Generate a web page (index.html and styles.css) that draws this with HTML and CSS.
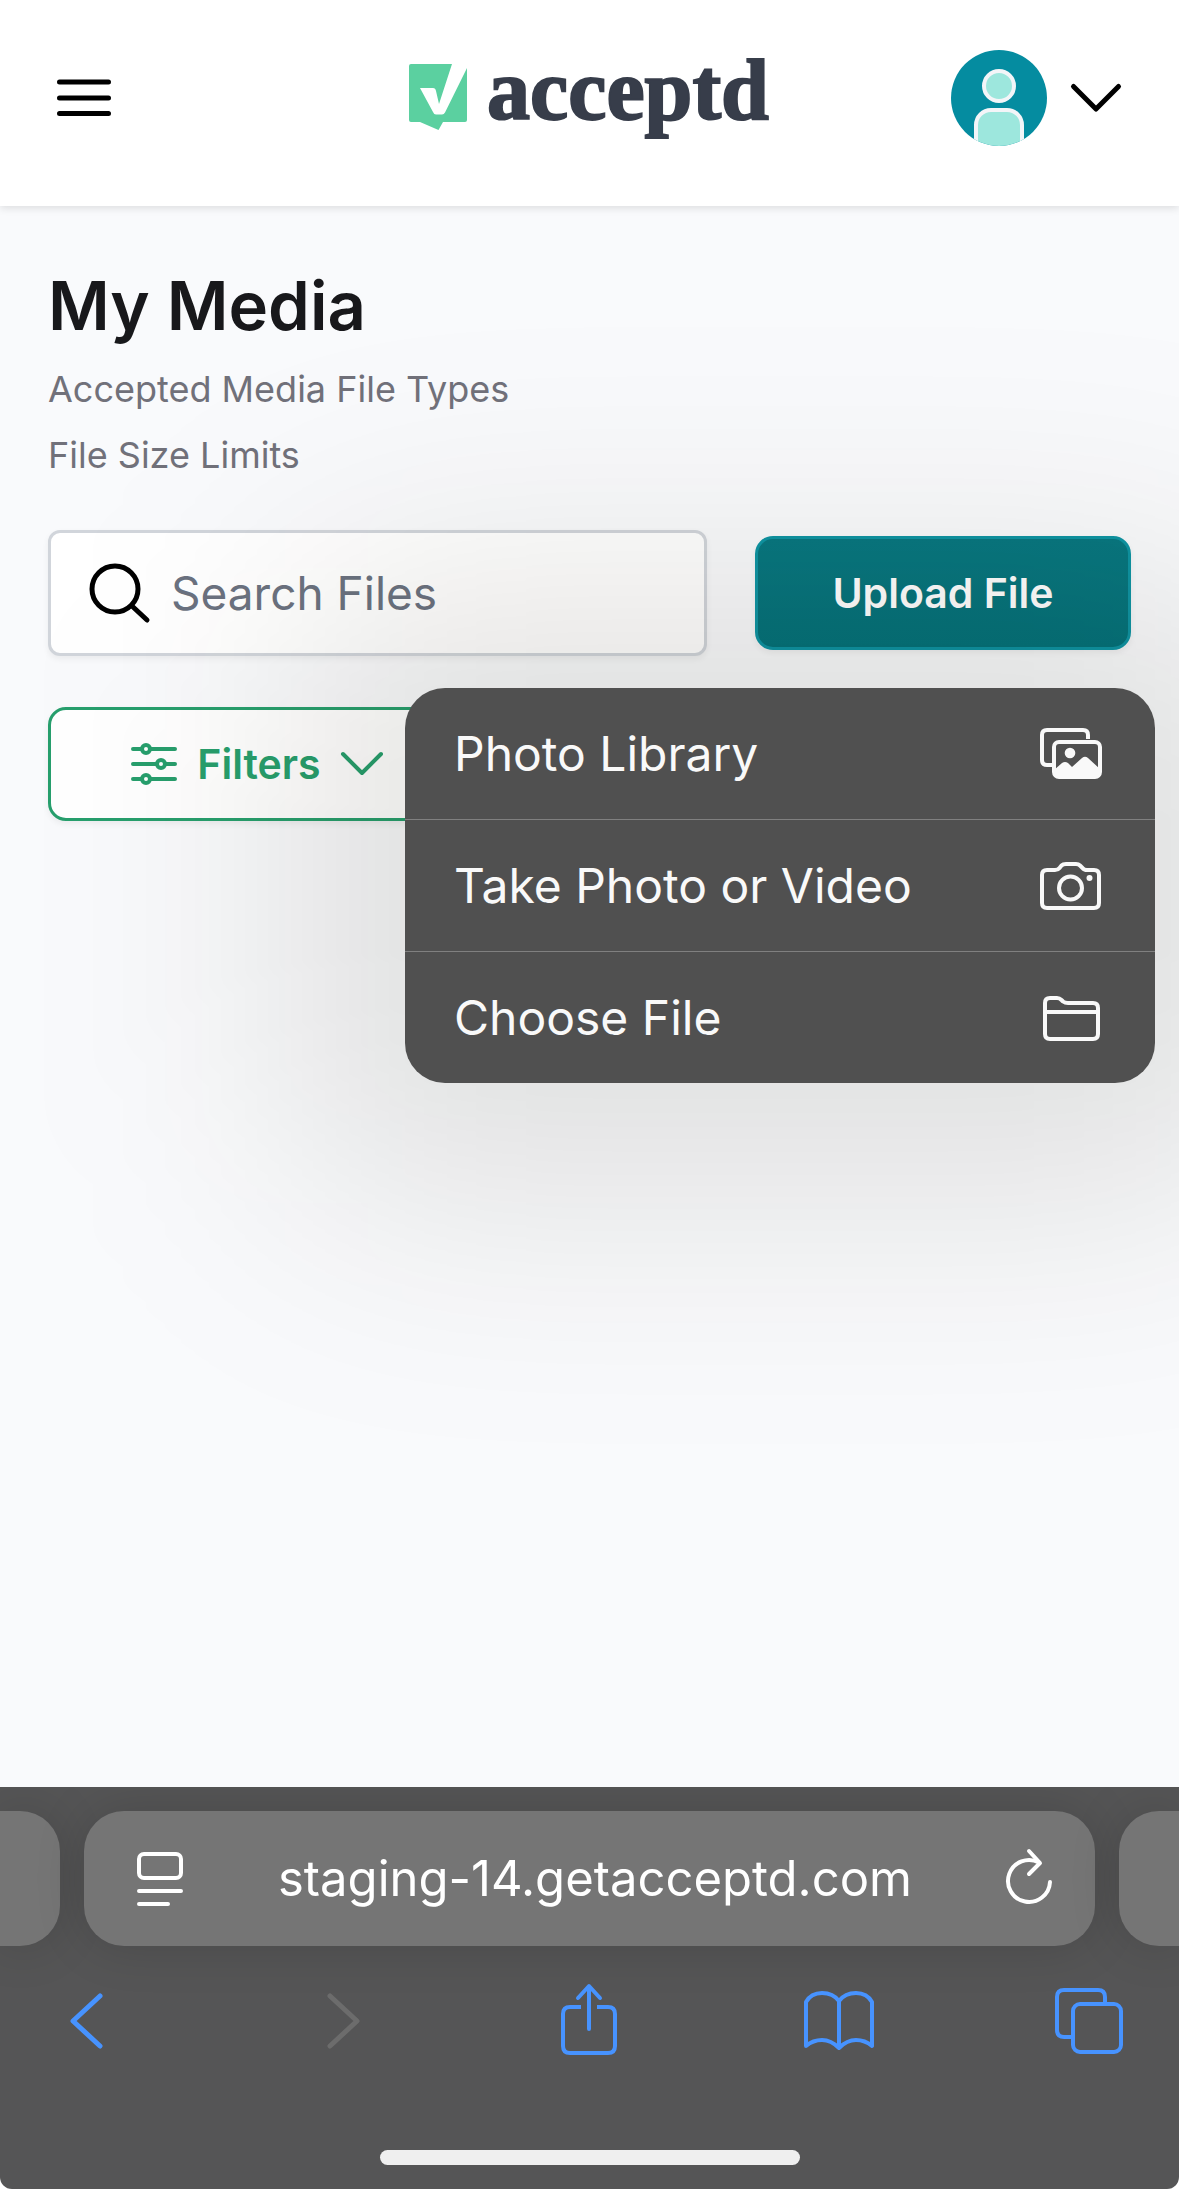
FILE: index.html
```html
<!DOCTYPE html>
<html lang="en">
<head>
    <meta charset="UTF-8">
    <meta name="viewport" content="width=device-width, initial-scale=1.0">
    <title>My Media</title>
    <link rel="stylesheet" href="styles.css">
</head>
<body>
    <header class="site-header">
        <button type="button" class="icon-button menu-toggle" aria-label="Open menu">
            <svg width="54" height="38" viewBox="0 0 54 38" fill="none" stroke="currentColor" stroke-width="5" stroke-linecap="round">
                <path d="M2.5 3h49M2.5 19h49M2.5 34.500h49"/>
            </svg>
        </button>
        <a href="#" class="logo">
            <svg class="logo-mark" width="58" height="67" viewBox="0 0 58 67" aria-hidden="true">
                <path fill="#5bd0a0" d="M2 0H43L30 40L27 27Q26.500 24 24 24H11L24 48Q25 50.500 27 50.500H33Q35 50.500 36 48.500L58 4V56Q58 58 56 58H34L29.500 66L11 58H2Q0 58 0 56V2Q0 0 2 0Z"/>
            </svg>
            <span class="logo-text">acceptd</span>
        </a>
        <button type="button" class="icon-button account" aria-label="Account">
            <svg width="96" height="96" viewBox="0 0 96 96">
                <clipPath id="avatarClip"><circle cx="48" cy="48" r="48"/></clipPath>
                <g clip-path="url(#avatarClip)">
                    <rect width="96" height="96" fill="#058ca0"/>
                    <g fill="#9de7dd" stroke="#f3f5f8" stroke-width="4">
                        <circle cx="48" cy="36" r="15"/>
                        <rect x="25" y="60" width="46" height="60" rx="15"/>
                    </g>
                </g>
            </svg>
            <svg width="50" height="28" viewBox="0 0 50 28" fill="none" stroke="currentColor" stroke-width="5" stroke-linecap="round" stroke-linejoin="round">
                <path d="M2.500 2.500L25 25L47.500 2.500"/>
            </svg>
        </button>
    </header>

    <main class="content">
        <h1>My Media</h1>
        <a href="#" class="help-link">Accepted Media File Types</a>
        <a href="#" class="help-link">File Size Limits</a>

        <div class="actions">
            <label class="search">
                <svg width="60" height="62" viewBox="0 0 60 62" fill="none" stroke="currentColor" stroke-width="5" stroke-linecap="round" aria-hidden="true">
                    <circle cx="25" cy="27" r="23"/>
                    <path d="M42 44L57 58"/>
                </svg>
                <input type="text" placeholder="Search Files" aria-label="Search Files">
            </label>
            <div class="upload">
                <button type="button" class="upload-button" aria-haspopup="true" aria-expanded="true">Upload File</button>
                <ul class="upload-menu">
                    <li>
                        <button type="button">
                            Photo Library
                            <svg width="62" height="52" viewBox="0 0 62 52" fill="none" stroke="currentColor" stroke-width="4">
                                <path d="M48 11V7Q48 2 43 2H7Q2 2 2 7V32Q2 37 7 37H12"/>
                                <rect x="14" y="14" width="46" height="35" rx="5"/>
                                <circle cx="30" cy="25" r="5.300" fill="currentColor" stroke="none"/>
                                <path fill="currentColor" stroke="none" d="M14 42L22 35Q25 33 28 35L32 39L42 30Q45 27.500 48 30L60 41V46Q60 49 56 49H18Q14 49 14 46Z"/>
                            </svg>
                        </button>
                    </li>
                    <li>
                        <button type="button">
                            Take Photo or Video
                            <svg width="62" height="52" viewBox="0 0 62 52" fill="none" stroke="currentColor" stroke-width="4" stroke-linejoin="round">
                                <path d="M7 10H15Q18 10 19.500 8L21.500 5.500Q23 4 26 4H36Q38.500 4 40 5.500L42.500 8Q44 10 47 10H54Q59 10 59 15V43Q59 48 54 48H7Q2 48 2 43V15Q2 10 7 10Z"/>
                                <circle cx="30.500" cy="28" r="11.500"/>
                                <circle cx="49.500" cy="18" r="3" fill="currentColor" stroke="none"/>
                            </svg>
                        </button>
                    </li>
                    <li>
                        <button type="button">
                            Choose File
                            <svg width="62" height="52" viewBox="0 0 62 52" fill="none" stroke="currentColor" stroke-width="4" stroke-linejoin="round">
                                <path d="M10 6H17Q19.500 6 21.500 8L23 9.500Q25 11 28 11H53Q58 11 58 16V42Q58 47 53 47H10Q5 47 5 42V11Q5 6 10 6Z"/>
                                <path d="M5 20H58"/>
                            </svg>
                        </button>
                    </li>
                </ul>
            </div>
        </div>

        <button type="button" class="filters">
            <svg width="46" height="42" viewBox="0 0 46 42" fill="none" stroke="currentColor" stroke-width="4" stroke-linecap="round">
                <path d="M2 6H10M20 6H44M2 21H25M35 21H44M2 36H10M20 36H44"/>
                <circle cx="15" cy="6" r="4"/>
                <circle cx="30" cy="21" r="4"/>
                <circle cx="15" cy="36" r="4"/>
            </svg>
            Filters
            <svg width="42" height="24" viewBox="0 0 42 24" fill="none" stroke="currentColor" stroke-width="4" stroke-linecap="round" stroke-linejoin="round">
                <path d="M2 2L21 21L40 2"/>
            </svg>
        </button>
    </main>

    <footer class="browser-bar">
        <div class="tabs">
            <div class="tab tab-side tab-previous"></div>
            <div class="tab tab-current">
                <button type="button" class="icon-button" aria-label="Page settings">
                    <svg width="46" height="54" viewBox="0 0 46 54" fill="none" stroke="currentColor" stroke-width="4" stroke-linecap="round">
                        <rect x="2" y="2" width="42" height="24" rx="5"/>
                        <path d="M2 39H44M2 52H31"/>
                    </svg>
                </button>
                <input type="text" value="staging-14.getacceptd.com" aria-label="Address">
                <button type="button" class="icon-button" aria-label="Reload">
                    <svg width="46" height="54" viewBox="0 0 46 54" fill="none" stroke="currentColor" stroke-width="4" stroke-linecap="round" stroke-linejoin="round">
                        <path d="M43 30A21 21 0 1 1 32 10.500"/>
                        <path d="M22 -1L33 11L22 22"/>
                    </svg>
                </button>
            </div>
            <div class="tab tab-side tab-next"></div>
        </div>
        <nav class="toolbar">
            <button type="button" class="icon-button" aria-label="Back">
                <svg width="90" height="72" viewBox="0 0 90 72" fill="none" stroke="currentColor" stroke-width="5" stroke-linecap="round" stroke-linejoin="round">
                    <path d="M56 12L29 37L56 62"/>
                </svg>
            </button>
            <button type="button" class="icon-button" aria-label="Forward" disabled>
                <svg width="90" height="72" viewBox="0 0 90 72" fill="none" stroke="currentColor" stroke-width="5" stroke-linecap="round" stroke-linejoin="round">
                    <path d="M36 12L63 37L36 62"/>
                </svg>
            </button>
            <button type="button" class="icon-button" aria-label="Share">
                <svg width="90" height="72" viewBox="0 0 90 72" fill="none" stroke="currentColor" stroke-width="4" stroke-linecap="round" stroke-linejoin="round">
                    <path stroke-linecap="butt" d="M36 23H25Q18 23 18 30V62Q18 69 25 69H63Q70 69 70 62V30Q70 23 63 23H52"/>
                    <path d="M44 45V3M33 14L44 2L55 14"/>
                </svg>
            </button>
            <button type="button" class="icon-button" aria-label="Bookmarks">
                <svg width="90" height="72" viewBox="0 0 90 72" fill="none" stroke="currentColor" stroke-width="4" stroke-linecap="round" stroke-linejoin="round">
                    <path d="M44 17Q38 9 27 9T11 18V62Q18 56 27 56T44 64Q52 56 61 56T77 62V18Q72 9 61 9T44 17V64"/>
                </svg>
            </button>
            <button type="button" class="icon-button" aria-label="Tabs">
                <svg width="90" height="72" viewBox="0 0 90 72" fill="none" stroke="currentColor" stroke-width="4" stroke-linecap="butt" stroke-linejoin="round">
                    <path d="M60 20V13Q60 6 53 6H19Q12 6 12 13V46Q12 53 19 53H26"/>
                    <rect x="28" y="20" width="48" height="48" rx="7"/>
                </svg>
            </button>
        </nav>
        <div class="home-indicator"></div>
    </footer>
</body>
</html>
```
FILE: styles.css
```css
* {
    box-sizing: border-box;
}

body {
    display: flex;
    flex-direction: column;
    min-height: 100vh;
    margin: 0;
    background: #fff;
    color: #18181b;
    font-family: Inter, "Liberation Sans", sans-serif;
}

button,
input {
    margin: 0;
    padding: 0;
    border: none;
    background: transparent;
    color: inherit;
    font: inherit;
}

button {
    cursor: pointer;
}

input {
    min-width: 0;
    outline: none;
}

a {
    color: inherit;
    text-decoration: none;
}

svg {
    display: block;
    flex-shrink: 0;
    overflow: visible;
}

.icon-button {
    display: flex;
    align-items: center;
}

/* Header */
.site-header {
    position: relative;
    z-index: 2;
    display: grid;
    grid-template-columns: 1fr auto 1fr;
    align-items: center;
    padding: 50px 58px 60px 57px;
    background: #fff;
    color: #000;
    box-shadow: 0 2px 8px rgba(0, 0, 0, 0.12);
}

.logo {
    display: flex;
    align-items: flex-start;
    align-self: start;
    gap: 20px;
    color: #373d4a;
}

.logo-mark {
    margin-top: 14px;
}

.logo-text {
    font-family: "Liberation Serif", serif;
    font-size: 86px;
    font-weight: bold;
    line-height: 80px;
    -webkit-text-stroke: 2px #373d4a;
}

.account {
    justify-self: end;
    gap: 24px;
}

/* Page */
.content {
    flex: 1;
    padding: 58px 48px;
    overflow: clip;
    background: #f9fafc;
}

h1 {
    margin: 0 0 8px;
    font-size: 67px;
    font-weight: 600;
    line-height: 84px;
}

.help-link {
    display: block;
    color: #71717a;
    font-size: 36px;
    line-height: 66px;
}

.help-link:last-of-type {
    margin-bottom: 42px;
}

.actions {
    display: flex;
    align-items: center;
    gap: 48px;
    margin-bottom: 51px;
}

.search {
    display: flex;
    flex: 1;
    align-items: center;
    gap: 21px;
    min-width: 0;
    height: 126px;
    padding: 0 39px;
    border: 3px solid #d1d5db;
    border-radius: 12px;
    background: #fff;
    color: #000;
    box-shadow: 0 3px 6px rgba(0, 0, 0, 0.06);
}

.search input {
    flex: 1;
    font-size: 46px;
    line-height: 60px;
}

.search input::placeholder {
    color: #6b7280;
    opacity: 1;
}

.upload {
    position: relative;
    z-index: 1;
}

.upload-button {
    display: block;
    width: 376px;
    height: 114px;
    border: 3px solid #0e94a3;
    border-radius: 18px;
    background: linear-gradient(#087780, #04727a);
    color: #fff;
    font-size: 41px;
    font-weight: 600;
    box-shadow: 0 3px 6px rgba(0, 0, 0, 0.06);
}

.upload-menu {
    position: absolute;
    top: 152px;
    right: -24px;
    width: 750px;
    margin: 0;
    padding: 0;
    list-style: none;
    color: #f9f9f9;
}

/* Soft shade spread over the page around the open menu */
.upload-menu::before {
    content: "";
    position: absolute;
    inset: -120px;
    border-radius: 110px;
    background: rgba(30, 20, 0, 0.11);
    filter: blur(125px);
    pointer-events: none;
}

.upload-menu li {
    position: relative;
    background: #505050;
}

.upload-menu li:first-child {
    border-radius: 40px 40px 0 0;
}

.upload-menu li:last-child {
    border-radius: 0 0 40px 40px;
}

.upload-menu li + li::before {
    content: "";
    display: block;
    height: 1px;
    background: #808080;
}

.upload-menu button {
    display: flex;
    align-items: center;
    justify-content: space-between;
    width: 100%;
    height: 131px;
    padding: 0 53px 0 49px;
    font-size: 48px;
    text-align: left;
}

.filters {
    display: flex;
    align-items: center;
    justify-content: center;
    gap: 20px;
    width: 418px;
    height: 114px;
    border: 3px solid #279f6d;
    border-radius: 18px;
    background: #fff;
    color: #279f6d;
    font-size: 41px;
    font-weight: 600;
    box-shadow: 0 3px 6px rgba(0, 0, 0, 0.06);
}

/* Browser controls */
.browser-bar {
    position: relative;
    z-index: 2;
    padding: 24px 0;
    overflow: hidden;
    border-radius: 0 0 12px 12px;
    background: #555556;
}

.tabs {
    display: flex;
    gap: 24px;
}

.tab {
    height: 135px;
    background: #757575;
    box-shadow: 0 0 50px rgba(0, 0, 0, 0.15);
}

.tab-side {
    width: 60px;
}

.tab-previous {
    border-radius: 0 40px 40px 0;
}

.tab-next {
    border-radius: 40px 0 0 40px;
}

.tab-current {
    display: flex;
    flex: 1;
    align-items: center;
    padding: 0 42px 0 53px;
    border-radius: 40px;
    color: #fff;
}

.tab-current input {
    flex: 1;
    font-size: 49px;
    line-height: 60px;
    text-align: center;
}

.toolbar {
    display: flex;
    justify-content: space-between;
    padding: 38px 44px 0;
    color: #4793ff;
}

.toolbar button:disabled {
    color: #6c6c6c;
}

.home-indicator {
    width: 420px;
    height: 15px;
    margin: 94px auto 0;
    border-radius: 8px;
    background: #efefef;
}
```
